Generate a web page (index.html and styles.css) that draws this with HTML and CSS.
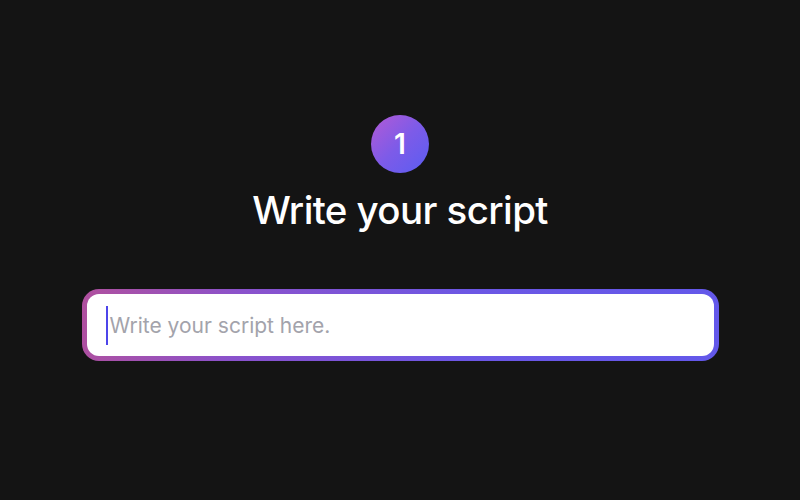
FILE: index.html
```html
<!DOCTYPE html>
<html lang="en">
<head>
    <meta charset="UTF-8">
    <meta name="viewport" content="width=device-width, initial-scale=1.0">
    <title>Write your script</title>
    <link rel="stylesheet" href="styles.css">
</head>
<body>
<main class="step">
    <div class="step-badge">1</div>
    <h1 class="step-title">Write your script</h1>
    <div class="script-field">
      <div class="script-input">
        <span class="caret"></span>
        <span class="placeholder">Write your script here.</span>
      </div>
    </div>
</main>
</body>
</html>
```

FILE: styles.css
```css
body {
  font-family: Inter, "Noto Sans", sans-serif;
  background-color: #141414;
  margin: 0;
  padding: 0;
  color: #fff;
}

.step {
  display: flex;
  flex-direction: column;
  align-items: center;
  padding-top: 115px;
}

.step-badge {
  width: 58px;
  height: 58px;
  border-radius: 50%;
  background: linear-gradient(135deg, #b45ad6 0%, #7d5be8 50%, #5a5df2 100%);
  display: flex;
  align-items: center;
  justify-content: center;
  font-size: 28px;
  font-weight: 600;
}

.step-title {
  margin: 13px 0 0;
  font-size: 38.5px;
  font-weight: 500;
  letter-spacing: -0.6px;
  line-height: 48px;
}

.script-field {
  margin-top: 55px;
  width: 637px;
  padding: 5px;
  box-sizing: border-box;
  border-radius: 17px;
  background: linear-gradient(100deg, #b0509e 0%, #8a52cc 25%, #6c57e4 60%, #6358ea 100%);
}

.script-input {
  height: 62px;
  background: #fff;
  border-radius: 12px;
  display: flex;
  align-items: center;
  padding-left: 19px;
}

.caret {
  width: 2px;
  height: 39px;
  background: #4d45ea;
  margin-right: 2px;
}

.placeholder {
  color: #a3a3ab;
  font-size: 21px;
}
```
